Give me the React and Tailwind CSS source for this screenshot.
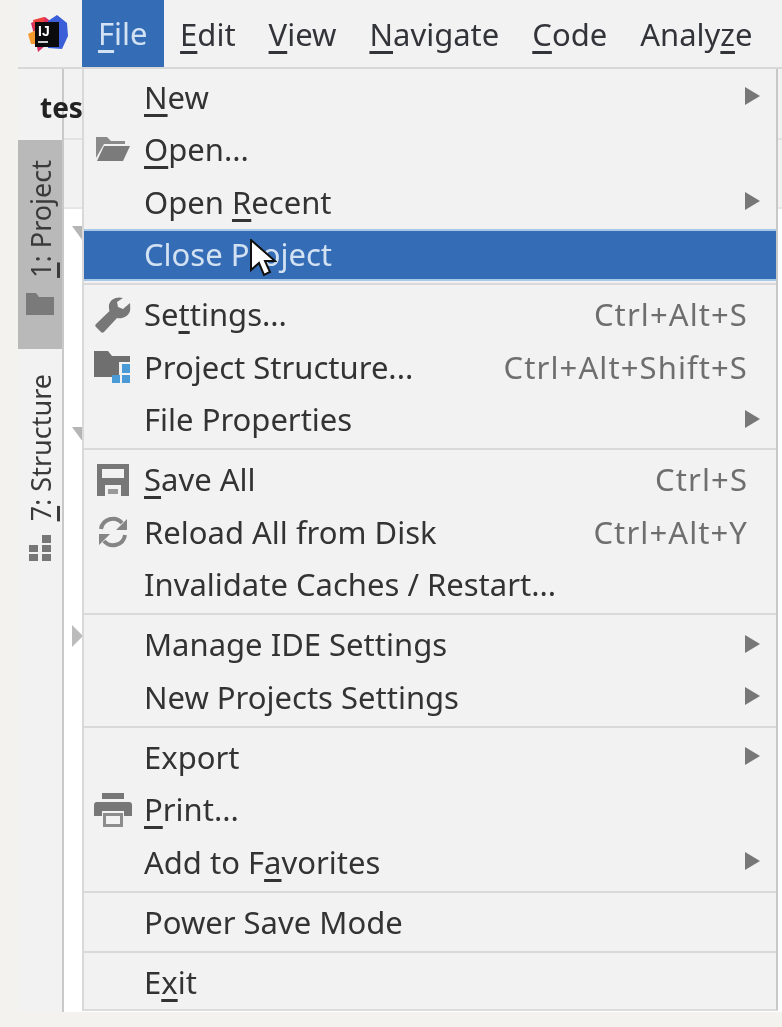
const sans = 'font-["Noto_Sans",sans-serif]'

// underline one letter of a label: [before, letter, after]
function Mnemonic({ parts, offset = 'underline-offset-[5px]' }) {
  return (
    <>
      {parts[0]}
      <u className={`decoration-[2.5px] ${offset}`}>{parts[1]}</u>
      {parts[2]}
    </>
  )
}

function Arrow() {
  return <div className="absolute right-[16px] top-[16px] w-0 h-0 border-y-[9px] border-y-transparent border-l-[15px] border-l-[#777]"></div>
}

const FolderOpenIcon = () => (
  <svg width="36" height="28" viewBox="0 0 36 28">
    <path d="M1 1h11l4 4h14v3H9L1 22z" fill="#8a8a8a" />
    <path d="M9 10h26l-7 15H2z" fill="#7b7b7b" />
  </svg>
)
const WrenchIcon = () => (
  <svg width="36" height="36" viewBox="0 0 36 36">
    <path d="M35 6l-7 6-5-2-1-5 6-4C22-1 15 2 14 8c-.3 2 0 4 .5 6L1 27c-1 1-1 2 0 3l5 5c1 1 2 1 3 0l13-14c5 1 11-1 13-7 .3-2 .3-5 0-8z" fill="#777" />
  </svg>
)
const StructureIcon = () => (
  <svg width="38" height="34" viewBox="0 0 38 34">
    <path d="M0 1h14l4 5h18v6H25v15H0z" fill="#6f6f6f" />
    <rect x="28" y="14" width="8" height="9" fill="#4a9ad8" />
    <rect x="18" y="25" width="8" height="8" fill="#4a9ad8" />
    <rect x="28" y="25" width="8" height="8" fill="#4a9ad8" />
  </svg>
)
const SaveIcon = () => (
  <svg width="32" height="32" viewBox="0 0 32 32">
    <path d="M0 0h32v32H0z" fill="#777" />
    <rect x="5" y="5" width="22" height="9" fill="#f2f2f2" />
    <rect x="8" y="21" width="16" height="11" fill="#f2f2f2" />
    <rect x="11" y="25" width="10" height="5" fill="#999" />
  </svg>
)
const ReloadIcon = () => (
  <svg width="32" height="32" viewBox="0 0 32 32" fill="none">
    <path d="M4 13a12 12 0 0 1 21-6" stroke="#858585" strokeWidth="4" />
    <path d="M28 19a12 12 0 0 1-21 6" stroke="#858585" strokeWidth="4" />
    <path d="M30 3v11H19zM2 29V18h11z" fill="#858585" />
  </svg>
)
const PrintIcon = () => (
  <svg width="38" height="34" viewBox="0 0 38 34">
    <rect x="8" y="0" width="22" height="6" fill="#777" />
    <path d="M3 9h32a3 3 0 0 1 3 3v11h-8v-5H8v5H0V12a3 3 0 0 1 3-3z" fill="#777" />
    <path d="M9 20h20v14H9z" fill="#8c8c8c" />
    <rect x="12" y="23" width="14" height="8" fill="#f2f2f2" />
  </svg>
)

const groups = [
  [
    { label: ['', 'N', 'ew'], arrow: true },
    { label: ['', 'O', 'pen...'], icon: <FolderOpenIcon /> },
    { label: ['Open ', 'R', 'ecent'], arrow: true },
    { text: 'Close Project', active: true },
  ],
  [
    { label: ['Se', 't', 'tings...'], icon: <WrenchIcon />, keys: 'Ctrl+Alt+S' },
    { text: 'Project Structure...', icon: <StructureIcon />, keys: 'Ctrl+Alt+Shift+S' },
    { text: 'File Properties', arrow: true },
  ],
  [
    { label: ['', 'S', 'ave All'], icon: <SaveIcon />, keys: 'Ctrl+S' },
    { text: 'Reload All from Disk', icon: <ReloadIcon />, keys: 'Ctrl+Alt+Y' },
    { text: 'Invalidate Caches / Restart...' },
  ],
  [
    { text: 'Manage IDE Settings', arrow: true },
    { text: 'New Projects Settings', arrow: true },
  ],
  [
    { text: 'Export', arrow: true },
    { label: ['', 'P', 'rint...'], icon: <PrintIcon /> },
    { label: ['Add to F', 'a', 'vorites'], arrow: true },
  ],
  [{ text: 'Power Save Mode' }],
  [{ label: ['E', 'x', 'it'] }],
]

function MenuRow({ item }) {
  return (
    <div className={`relative h-[52.5px] flex items-center pl-[60px] pr-[28px] text-[31px] leading-none ${item.active ? 'bg-[#356cb6] text-[#d3e2f3] border-y-2 border-[#a8c8e8]' : 'text-[#333]'}`}>
      {item.icon && <div className="absolute left-[9px] top-0 bottom-0 w-[40px] flex items-center justify-center">{item.icon}</div>}
      <span className="flex-1 whitespace-nowrap">{item.text || <Mnemonic parts={item.label} />}</span>
      {item.keys && <span className="text-[#6e6e6e] tracking-[1.1px]">{item.keys}</span>}
      {item.arrow && <Arrow />}
    </div>
  )
}

const topMenu = [
  { parts: ['', 'E', 'dit'] },
  { parts: ['', 'V', 'iew'] },
  { parts: ['', 'N', 'avigate'] },
  { parts: ['', 'C', 'ode'] },
  { parts: ['Analy', 'z', 'e'] },
]

export default function App() {
  return (
    <div className={`relative w-[782px] h-[1027px] overflow-hidden bg-[#f3f2ef] pl-[18px] pb-[15px] flex flex-col ${sans} blur-[0.6px]`}>
      {/* title bar */}
      <div className="h-[69px] shrink-0 flex bg-[#f2f2f2] border-b-2 border-[#d8d8d8] text-[31px] text-[#33343a]">
        <div className="w-[64px] shrink-0 flex items-center pl-[10px]">
          <svg width="40" height="40" viewBox="0 0 40 40">
            <path d="M3 9l14-6 8 6v16L10 38l-2-10z" fill="#d92f63" />
            <path d="M20 7l9-6 10 8 1 13-6 13-14-1z" fill="#3a5ed8" />
            <path d="M0 20l8-4v14H3z" fill="#f59a2e" />
            <path d="M5 6l11-3v14H7z" fill="#f0443f" />
            <rect x="7" y="8" width="24" height="25" fill="#0b0b0e" />
            <text x="10" y="22" fill="#fff" fontSize="14" fontWeight="700" fontFamily="Liberation Sans">IJ</text>
            <rect x="10" y="27" width="10" height="2" fill="#ccc" />
          </svg>
        </div>
        <div className="h-[68px] px-[16px] flex items-center bg-[#356cb6] text-[#d3e2f3] -mt-px">
          <span><Mnemonic parts={['', 'F', 'ile']} /></span>
        </div>
        {topMenu.map((m) => (
          <div key={m.parts.join('')} className="h-[68px] px-[16.5px] flex items-center shrink-0">
            <span><Mnemonic parts={m.parts} /></span>
          </div>
        ))}
      </div>

      <div className="flex-1 flex min-h-0">
        {/* tool window strip */}
        <div className="w-[46px] shrink-0 flex flex-col pt-[71px] border-r-2 border-[#c9c9c9] bg-[#f2f2f2] text-[27px] text-[#3a3a3a]">
          <div className="h-[209px] bg-[#b9b9b9] flex flex-col items-center pt-[20px] gap-[15px]">
            <div className="[writing-mode:vertical-rl] rotate-180 leading-none whitespace-nowrap"><Mnemonic parts={['', '1', ': Project']} offset="underline-offset-[2px]" /></div>
            <svg width="28" height="22" viewBox="0 0 28 22"><path d="M0 0h10l3 4h15v18H0z" fill="#7a7a7a" /></svg>
          </div>
          <div className="flex flex-col items-center pt-[25px] gap-[14px]">
            <div className="[writing-mode:vertical-rl] rotate-180 leading-none whitespace-nowrap"><Mnemonic parts={['', '7', ': Structure']} offset="underline-offset-[2px]" /></div>
            <svg width="26" height="26" viewBox="0 0 26 26" fill="#777"><rect x="15" y="0" width="9" height="8" /><rect x="15" y="10" width="9" height="7" /><rect x="2" y="10" width="9" height="7" /><rect x="2" y="19" width="9" height="7" /><rect x="15" y="19" width="9" height="7" /></svg>
          </div>
        </div>

        {/* editor area, mostly behind the menu */}
        <div className="flex-1 flex flex-col bg-white">
          <div className="h-[71px] shrink-0 bg-[#f2f2f2] border-b-2 border-[#e2e2e2] flex items-center pt-[6px]">
            <span className="text-[28px] font-bold text-[#222] ml-[-24px]">tes</span>
          </div>
          <div className="h-[69px] shrink-0 bg-[#f2f2f2] border-b-2 border-[#e6e6e6]"></div>
          <div className="flex-1 relative">
            <div className="absolute left-[8px] top-[17px] w-0 h-0 border-t-[15px] border-t-[#b5b5b5] border-l-[11px] border-l-transparent"></div>
            <div className="absolute left-[8px] top-[218px] w-0 h-0 border-t-[15px] border-t-[#b5b5b5] border-l-[11px] border-l-transparent"></div>
            <div className="absolute left-[8px] top-[416px] w-0 h-0 border-y-[11px] border-y-transparent border-l-[11px] border-l-[#bbb]"></div>
          </div>
        </div>
      </div>

      {/* File dropdown */}
      <div className="absolute left-[82px] top-[69px] w-[696px] bg-[#f2f2f2] border-l-2 border-r-2 border-[#d9d9d9] border-r-[#c8c8c8] border-b-2 border-b-[#dcdcdc]">
        {groups.map((group, i) => (
          <div key={i} className={i > 0 ? 'border-t-2 border-[#d9d9d9] pt-[3.5px] mt-[2px]' : 'pt-[2px]'}>
            {group.map((item, j) => <MenuRow key={j} item={item} />)}
          </div>
        ))}
      </div>

      {/* mouse pointer */}
      <svg className="absolute left-[249px] top-[239px]" width="28" height="40" viewBox="0 0 28 40">
        <path d="M2 1v30l8-7 5 12 6-3-5-11h10z" fill="#fff" stroke="#111" strokeWidth="2" />
      </svg>
    </div>
  )
}
